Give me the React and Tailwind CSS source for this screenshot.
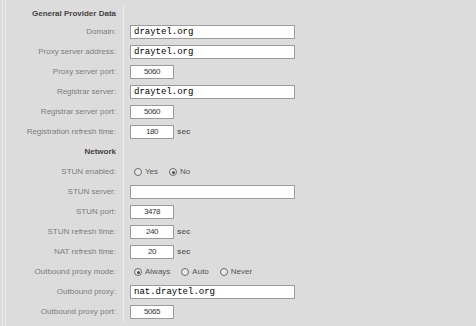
import React from 'react';

const LABEL_FONT = { fontFamily: '"Liberation Sans", Arial, sans-serif' };

const TextField = ({ value = '', wide = false }) => (
  <div
    className={`h-[14px] bg-white border border-[#9c9c9c] flex items-center ${
      wide ? 'w-[165px] pl-[3px]' : 'w-[44px] justify-center'
    }`}
  >
    {wide ? (
      <span
        className="text-[9px] leading-none text-black"
        style={{ fontFamily: '"Liberation Mono", "Courier New", monospace' }}
      >
        {value}
      </span>
    ) : (
      <span className="text-[8px] leading-none text-[#333] tracking-[-0.4px]">
        {value}
      </span>
    )}
  </div>
);

const Sec = () => (
  <span className="ml-[3px] text-[8px] font-bold text-[#666]">sec</span>
);

const Radio = ({ label, checked }) => (
  <label className="flex items-center gap-[3px] mr-[11px]">
    <span className="w-[8px] h-[8px] rounded-full border border-[#6a6a6a] bg-[#e8e8e8] flex items-center justify-center">
      {checked && <span className="w-[3px] h-[3px] rounded-full bg-[#4a4a4a]" />}
    </span>
    <span className="text-[8px] text-[#555]">{label}</span>
  </label>
);

const Row = ({ label, heading, children, first }) => (
  <div className={`flex ${first ? 'h-[22px] pt-[6px]' : 'h-[20px]'}`}>
    <div className="w-[118px] border-r border-[#ececec] flex items-center justify-end pr-[7px]">
      <span
        className={
          heading
            ? 'text-[8px] font-bold text-[#444]'
            : 'text-[8px] text-[#7c7c7c]'
        }
      >
        {label}
      </span>
    </div>
    <div className="flex-1 flex items-center pl-[6px]">{children}</div>
  </div>
);

export default function App() {
  return (
    <div
      className="w-[476px] h-[326px] bg-[#dcdcdc] flex overflow-hidden"
      style={LABEL_FONT}
    >
      <div className="w-[2px]" />
      <div className="w-px bg-[#ededed]" />
      <div className="w-[2px]" />
      <div className="w-px bg-[#e9e9e9]" />
      <div className="flex-1 flex flex-col">
        <Row label="General Provider Data" heading first />
        <Row label="Domain:">
          <TextField wide value="draytel.org" />
        </Row>
        <Row label="Proxy server address:">
          <TextField wide value="draytel.org" />
        </Row>
        <Row label="Proxy server port:">
          <TextField value="5060" />
        </Row>
        <Row label="Registrar server:">
          <TextField wide value="draytel.org" />
        </Row>
        <Row label="Registrar server port:">
          <TextField value="5060" />
        </Row>
        <Row label="Registration refresh time:">
          <TextField value="180" />
          <Sec />
        </Row>
        <Row label="Network" heading />
        <Row label="STUN enabled:">
          <div className="flex items-center pl-[4px]">
            <Radio label="Yes" />
            <Radio label="No" checked />
          </div>
        </Row>
        <Row label="STUN server:">
          <TextField wide />
        </Row>
        <Row label="STUN port:">
          <TextField value="3478" />
        </Row>
        <Row label="STUN refresh time:">
          <TextField value="240" />
          <Sec />
        </Row>
        <Row label="NAT refresh time:">
          <TextField value="20" />
          <Sec />
        </Row>
        <Row label="Outbound proxy mode:">
          <div className="flex items-center pl-[4px]">
            <Radio label="Always" checked />
            <Radio label="Auto" />
            <Radio label="Never" />
          </div>
        </Row>
        <Row label="Outbound proxy:">
          <TextField wide value="nat.draytel.org" />
        </Row>
        <Row label="Outbound proxy port:">
          <TextField value="5065" />
        </Row>
      </div>
    </div>
  );
}
